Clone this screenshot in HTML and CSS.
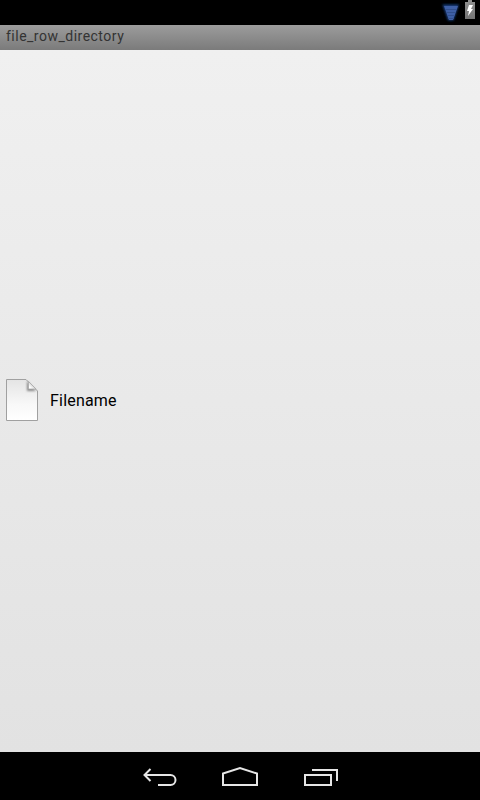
FILE: index.html
```html
<!DOCTYPE html>
<html lang="en">
<head>
<meta charset="utf-8">
<title>file_row_directory</title>
<link rel="stylesheet" href="styles.css">
</head>
<body>
<div class="screen">
  <div class="status-bar">
    <svg class="status-icons" width="40" height="25" viewBox="0 0 40 25">
      <defs>
        <filter id="glow" x="-30%" y="-30%" width="160%" height="160%"><feGaussianBlur stdDeviation="1"/></filter>
        <linearGradient id="battery" x2="0" y2="1"><stop stop-color="#929292"/><stop offset="1" stop-color="#747474"/></linearGradient>
      </defs>
      <path d="M2.500 4.500h16.500l-5.500 16H8z" fill="#1b3f80" filter="url(#glow)"/>
      <path d="M4 6h14l-5 14H9z" fill="#3e5fa5"/>
      <path d="M5 9.500h12M6 12.500h10M7 15.500h8M8 18.500h6" stroke="#314f8d"/>
      <path d="M28 0h4v2h3v17H25V2h3z" fill="url(#battery)"/>
      <path d="M29 5h4l-2 4h2l-5 7 1-5h-2z" fill="#fff"/>
    </svg>
  </div>
  <header class="title-bar">file_row_directory</header>
  <main class="content">
    <div class="file-row">
      <svg class="file-icon" width="34" height="44" viewBox="0 0 34 44">
        <defs>
          <linearGradient id="paper" x2="0" y2="1"><stop stop-color="#e4e4e4"/><stop offset=".6" stop-color="#f8f8f8"/><stop offset="1" stop-color="#fff"/></linearGradient>
          <linearGradient id="fold" x1="0" y1="1" x2="1" y2="0"><stop offset=".2" stop-color="#fff"/><stop offset=".6" stop-color="#ccc"/></linearGradient>
          <filter id="shade" x="-30%" y="-30%" width="160%" height="160%"><feGaussianBlur stdDeviation=".8"/></filter>
        </defs>
        <path d="M1.500 1.500h19.500l11.500 11.500v29.500h-31z" fill="url(#paper)" stroke="#a0a0a0"/>
        <path d="M22 3v10h9z" fill="#888" filter="url(#shade)"/>
        <path d="M23.500 3.500v7.500h7.500z" fill="url(#fold)" stroke="#aaa" stroke-width=".8"/>
      </svg>
      <span class="file-name">Filename</span>
    </div>
  </main>
  <nav class="nav-bar">
    <svg width="36" height="24" viewBox="142 765 36 24"><path d="M150.500 769l-6 6 6 6M144.500 775H170.500a5 5 0 0 1 0 10H158"/></svg>
    <svg width="38" height="24" viewBox="221 765 38 24"><path d="M223 785v-11.500l17-5.500 17 5.500V785z"/></svg>
    <svg width="38" height="24" viewBox="302 765 38 24"><path d="M305 775h26v10h-26zM312 770h25v11"/></svg>
  </nav>
</div>
</body>
</html>
```
FILE: styles.css
```css
body {
  margin: 0;
  font-family: Roboto, sans-serif;
}

.screen {
  display: flex;
  flex-direction: column;
  width: 480px;
  height: 800px;
  overflow: hidden;
  background: #000;
}

.status-bar {
  display: flex;
  justify-content: flex-end;
  height: 25px;
}

.title-bar {
  box-sizing: border-box;
  height: 25px;
  padding-left: 6px;
  background: linear-gradient(#9c9c9c, #7b7b7b);
  color: #333;
  font-size: 14px;
  line-height: 23px;
  letter-spacing: 0.49px;
}

.content {
  display: flex;
  flex: 1;
  align-items: center;
  background: linear-gradient(#f0f0f0, #e2e2e2);
}

.file-row {
  display: flex;
  align-items: center;
  gap: 11px;
  padding-left: 5px;
}

.file-icon {
  display: block;
  margin-bottom: 2px;
}

.file-name {
  color: #000;
  font-size: 16px;
  line-height: 20px;
  letter-spacing: 0.2px;
}

.nav-bar {
  display: flex;
  box-sizing: border-box;
  justify-content: space-between;
  height: 48px;
  padding: 13px 140px 0 142px;
}

.nav-bar path {
  fill: none;
  stroke: #e6e6e6;
  stroke-width: 2;
}
```
